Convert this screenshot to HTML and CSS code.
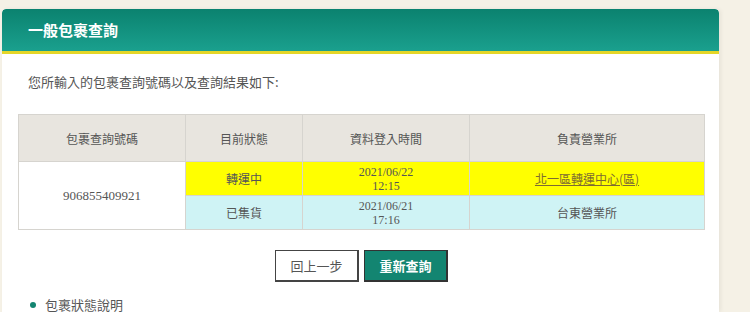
FILE: index.html
```html
<!DOCTYPE html>
<html lang="zh-Hant">
<head>
  <meta charset="UTF-8">
  <title>一般包裹查詢</title>
  <link rel="stylesheet" href="styles.css">
</head>
<body>
  <div class="panel">
    <h2 class="panel-title">一般包裹查詢</h2>
    <div class="panel-body">
      <p class="intro">您所輸入的包裹查詢號碼以及查詢結果如下:</p>
      <table class="result">
        <thead>
          <tr>
            <th class="c-no">包裹查詢號碼</th>
            <th class="c-status">目前狀態</th>
            <th class="c-time">資料登入時間</th>
            <th class="c-office">負責營業所</th>
          </tr>
        </thead>
        <tbody>
          <tr class="row-now">
            <td rowspan="2" class="num">906855409921</td>
            <td>轉運中</td>
            <td class="time">2021/06/22<br>12:15</td>
            <td><a href="#">北一區轉運中心(區)</a></td>
          </tr>
          <tr class="row-old">
            <td>已集貨</td>
            <td class="time">2021/06/21<br>17:16</td>
            <td>台東營業所</td>
          </tr>
        </tbody>
      </table>
      <div class="actions">
        <button class="btn">回上一步</button>
        <button class="btn btn-main">重新查詢</button>
      </div>
      <ul class="notes">
        <li>包裹狀態說明</li>
      </ul>
    </div>
  </div>
</body>
</html>
```

FILE: styles.css
```css
body {
  margin: 0;
  padding: 9px 31px 0 2px;
  background: #f5f1e6;
  font-family: "Noto Sans CJK TC", "Liberation Sans", sans-serif;
  color: #555;
  height: 303px;
  overflow: hidden;
}
.panel {
  background: #fff;
  border-radius: 4px 4px 0 0;
  box-shadow: 2px 0 4px rgba(0,0,0,0.06);
  height: 303px;
  overflow: hidden;
}
.panel-title {
  margin: 0;
  height: 42px;
  line-height: 42px;
  padding-left: 26px;
  font-size: 15px;
  font-weight: bold;
  color: #fff;
  background: linear-gradient(#0b826f, #1aa08e);
  border-bottom: 3px solid #e5d628;
  border-radius: 4px 4px 0 0;
}
.panel-body {
  padding: 0 14px 0 16px;
}
.intro {
  margin: 0;
  padding: 18px 0 0 10px;
  height: 42px;
  font-size: 13px;
  line-height: 20px;
  color: #555;
}
.result {
  border-collapse: collapse;
  width: 687px;
  font-size: 12px;
  text-align: center;
  color: #555;
}
.result th,
.result td {
  border: 1px solid #d6d4cf;
  padding: 0;
}
.result th {
  background: #e8e5df;
  font-weight: normal;
  height: 46px;
}
.result td {
  height: 33px;
  line-height: 14px;
}
.c-no { width: 166px; }
.c-status { width: 116px; }
.c-time { width: 166px; }
.result .num {
  background: #fff;
  font-family: "Liberation Serif", serif;
  font-size: 13px;
}
.result .time {
  font-family: "Liberation Serif", serif;
  font-size: 12px;
}
.row-now td { background: #ffff00; }
.row-old td { background: #cff3f5; }
.result a {
  color: #7d6b32;
}
.actions {
  display: flex;
  justify-content: center;
  gap: 5px;
  width: 687px;
  margin-top: 20px;
}
.btn {
  width: 84px;
  height: 32px;
  font-family: "Noto Sans CJK TC", sans-serif;
  font-size: 13px;
  color: #555;
  background: #fff;
  border: 1px solid #444;
  border-bottom-width: 2px;
  border-right-width: 2px;
  cursor: pointer;
}
.btn-main {
  background: #138571;
  color: #fff;
  font-weight: bold;
  border-color: #333;
}
.notes {
  margin: 14px 0 0;
  padding: 0 0 0 12px;
  list-style: none;
}
.notes li {
  font-size: 13px;
  line-height: 18px;
  display: flex;
  align-items: center;
  gap: 9px;
}
.notes li::before {
  content: "";
  width: 6px;
  height: 6px;
  border-radius: 50%;
  background: #138571;
}
```
